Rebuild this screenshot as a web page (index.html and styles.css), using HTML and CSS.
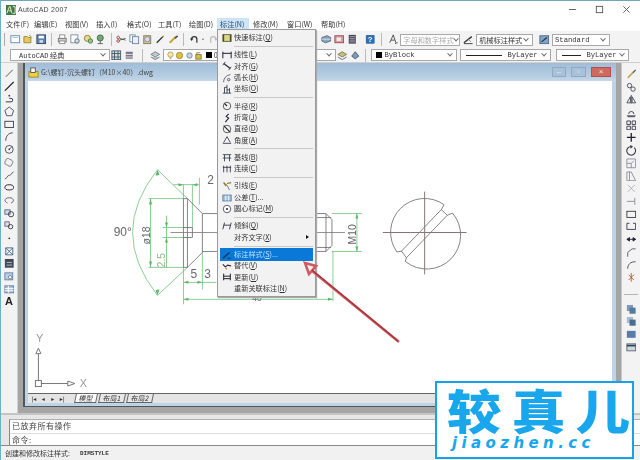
FILE: index.html
```html
<!DOCTYPE html>
<html lang="zh">
<head>
<meta charset="utf-8">
<title>AutoCAD 2007</title>
<link rel="stylesheet" href="styles.css">
</head>
<body>
<div class="app">
  <header class="titlebar">
    <svg class="applogo" viewBox="0 0 12 12"><rect width="12" height="12" fill="#3c7a52"/><path d="M1 10 4 2h1l2 8M3 7h3M8 2h3v8H8" fill="none" stroke="#f2e9a8" stroke-width="1.2"/></svg>
    <span class="apptitle">AutoCAD 2007</span>
    <span class="grow"></span>
    <svg class="winbtn" viewBox="0 0 10 10"><path d="M1 5h8" stroke="#555"/></svg>
    <svg class="winbtn" viewBox="0 0 10 10"><rect x="1.5" y="1.5" width="7" height="7" fill="none" stroke="#555"/></svg>
    <svg class="winbtn" viewBox="0 0 10 10"><path d="M1.5 1.5l7 7M8.5 1.5l-7 7" stroke="#555"/></svg>
  </header>
  <nav class="menubar">
    <span class="mi mi-first">文件(F)</span><span class="mi">编辑(E)</span><span class="mi">视图(V)</span><span class="mi">插入(I)</span><span class="mi">格式(O)</span><span class="mi">工具(T)</span><span class="mi">绘图(D)</span><span class="mi mi-on">标注(N)</span><span class="mi mi-wide">修改(M)</span><span class="mi mi-wide">窗口(W)</span><span class="mi">帮助(H)</span>
  </nav>
  <div class="toolrow row1">
    <span class="grip"></span>
    <svg class="ic" viewBox="0 0 12 12"><rect x="1" y="2" width="10" height="8" fill="#fff" stroke="#5b87b8"/><path d="M3 4h6" stroke="#9cc"/></svg>
    <svg class="ic" viewBox="0 0 12 12"><path d="M1 10V3h4l1 1h3v6z" fill="#e8c85a" stroke="#9a8030"/><path d="M7 1l3 3" stroke="#5a8a3a"/></svg>
    <svg class="ic" viewBox="0 0 12 12"><rect x="1" y="1" width="10" height="10" fill="#5c84b8" stroke="#345"/><rect x="3" y="2" width="6" height="3" fill="#fff"/><rect x="4" y="7" width="4" height="3" fill="#cde"/></svg>
    <span class="tsep"></span>
    <svg class="ic" viewBox="0 0 12 12"><rect x="3" y="1" width="6" height="4" fill="#fff" stroke="#888"/><rect x="1.500" y="5" width="9" height="4" fill="#ccc" stroke="#777"/><rect x="3" y="8" width="6" height="3" fill="#fff" stroke="#888"/></svg>
    <svg class="ic" viewBox="0 0 12 12"><rect x="1" y="1" width="8" height="9" fill="#fff" stroke="#789"/><circle cx="8" cy="8" r="2.500" fill="#cfe3f2" stroke="#567"/></svg>
    <svg class="ic" viewBox="0 0 12 12"><circle cx="5" cy="5" r="3.500" fill="#e8d890" stroke="#8a7a30"/><circle cx="8.500" cy="8" r="2.500" fill="#9cc48a" stroke="#4a7a3a"/></svg>
    <svg class="ic" viewBox="0 0 12 12"><circle cx="6" cy="4.500" r="3.500" fill="#78a868" stroke="#3a6a50"/><path d="M6 8v3M3 11h6" stroke="#555"/></svg>
    <span class="tsep"></span>
    <svg class="ic" viewBox="0 0 12 12"><circle cx="2.500" cy="4" r="1.500" fill="none" stroke="#a33"/><circle cx="2.500" cy="8" r="1.500" fill="none" stroke="#a33"/><path d="M4 5l7 2M4 7l7-2" stroke="#555"/></svg>
    <svg class="ic" viewBox="0 0 12 12"><rect x="1" y="1" width="6" height="8" fill="#fff" stroke="#68a"/><rect x="4" y="3" width="7" height="8" fill="#eef" stroke="#68a"/></svg>
    <svg class="ic" viewBox="0 0 12 12"><rect x="2" y="2" width="8" height="9" fill="#d8c890" stroke="#875"/><circle cx="6" cy="6" r="3" fill="#dde" stroke="#789"/></svg>
    <svg class="ic" viewBox="0 0 12 12"><path d="M2 10 9 3" stroke="#333" stroke-width="1.600"/><path d="M9 3l1-1" stroke="#b90" stroke-width="1.600"/></svg>
    <svg class="ic" viewBox="0 0 12 12"><path d="M2 10 9 3" stroke="#c9a030" stroke-width="2.200"/><path d="M8 5l3-3" stroke="#556" stroke-width="2"/></svg>
    <span class="tsep"></span>
    <svg class="ic" viewBox="0 0 12 12"><path d="M9 10V6a3 3 0 0 0-6 0" fill="none" stroke="#333" stroke-width="1.400"/><path d="M1 5l2 3 2-3z" fill="#234"/></svg>
    <svg class="ic ic-narrow" viewBox="0 0 6 12"><circle cx="3" cy="6" r="1" fill="#444"/></svg>
    <svg class="ic" viewBox="0 0 12 12"><path d="M3 10V6a3 3 0 0 1 6 0" fill="none" stroke="#bbb" stroke-width="1.400"/><path d="M7 5l2 3 2-3z" fill="#bbb"/></svg>
    <span class="grow"></span>
    <svg class="ic" viewBox="0 0 12 12"><path d="M1 4l6-2 4 2v4l-6 2-4-2z" fill="#8aa8c0" stroke="#567"/><path d="M1 6h10" stroke="#dde"/></svg>
    <svg class="ic" viewBox="0 0 12 12"><rect x="1" y="2" width="10" height="8" fill="#d89aa8" stroke="#945"/><rect x="3" y="4" width="5" height="4" fill="#eed"/></svg>
    <svg class="ic" viewBox="0 0 12 12"><rect x="2" y="1" width="8" height="10" fill="#445"/><path d="M3 3h6M3 5h6M3 7h6M3 9h6" stroke="#aab"/></svg>
    <span class="gap5"></span>
    <svg class="ic" viewBox="0 0 12 12"><rect x="1" y="1" width="10" height="10" rx="1" fill="#2f6fb5"/><text x="6" y="9.500" class="helpq">?</text></svg>
    <span class="tsep sep-help"></span>
    <svg class="ic" viewBox="0 0 12 12"><path d="M2 10 6 1l3 9M3.500 7h4M8 11c2-1 3-1 3-1" fill="none" stroke="#444"/></svg>
    <span class="combo combo-dim c-style"><span>字母和数字样式</span><i class="chev"></i></span>
    <svg class="ic" viewBox="0 0 12 12"><path d="M1 10l9-7" stroke="#333" stroke-width="1.500"/><path d="M1 11h10" stroke="#333"/><path d="M6 6l3 3" stroke="#888"/></svg>
    <span class="combo c-dim"><span>机械标注样式</span><i class="chev"></i></span>
    <svg class="ic" viewBox="0 0 12 12"><rect x="1" y="2" width="10" height="9" fill="#7fa4cc" stroke="#567"/><path d="M3 9l6-5" stroke="#234" stroke-width="1.400"/></svg>
    <span class="combo c-std mono"><span>Standard</span><i class="chev"></i></span>
  </div>
  <div class="toolrow row2">
    <span class="combo c-work"><span><b class="mono lat">AutoCAD</b> 经典</span><i class="chev"></i></span>
    <svg class="ic" viewBox="0 0 12 12"><rect x="1" y="1" width="10" height="10" fill="#cdd" stroke="#456"/><path d="M1 4h10M1 8h10M4 1v10M8 1v10" stroke="#456"/></svg>
    <svg class="ic" viewBox="0 0 12 12"><rect x="2" y="2" width="8" height="8" fill="#778"/><path d="M2 5h8M2 8h8" stroke="#eee"/></svg>
    <span class="tsep sep-wide"></span>
    <svg class="ic" viewBox="0 0 12 12"><path d="M1 5l5-3 5 3-5 3zM1 8l5 3 5-3" fill="#bcc" stroke="#778"/></svg>
    <span class="combo c-layer">
      <svg class="lay" viewBox="0 0 10 10"><circle cx="5" cy="4" r="3" fill="#f6ec8c" stroke="#a98"/><path d="M4 8h2" stroke="#777"/></svg>
      <svg class="lay" viewBox="0 0 10 10"><circle cx="5" cy="5" r="3.500" fill="#e3c22c" stroke="#986"/></svg>
      <svg class="lay" viewBox="0 0 10 10"><circle cx="5" cy="5" r="3" fill="#c7d3e0" stroke="#789"/></svg>
      <svg class="lay" viewBox="0 0 10 10"><rect x="2" y="4" width="6" height="5" fill="#d8c030" stroke="#875"/><path d="M3 4V2h4" fill="none" stroke="#875"/></svg>
      <i class="swatch"></i><span>0</span><i class="chev"></i>
    </span>
    <svg class="ic" viewBox="0 0 12 12"><path d="M1 5l5-3 5 3-5 3z" fill="#c6c26a" stroke="#776"/><path d="M1 8l5 3 5-3" fill="none" stroke="#667"/></svg>
    <svg class="ic" viewBox="0 0 12 12"><path d="M2 7l4-5 4 5-4 3z" fill="#7b9cc0" stroke="#456"/></svg>
    <span class="tsep"></span>
    <span class="combo c-by mono"><i class="swatch"></i><span>ByBlock</span><i class="chev"></i></span>
    <span class="combo c-line mono"><i class="ln ln-long"></i><span>ByLayer</span><i class="chev"></i></span>
    <span class="combo c-line2 mono"><i class="ln"></i><span>ByLayer</span><i class="chev"></i></span>
  </div>

  <main class="workspace">
    <aside class="sidebar left">
      <svg class="ic" viewBox="0 0 12 12"><path d="M2 10 10 2" stroke="#444"/></svg>
      <svg class="ic" viewBox="0 0 12 12"><path d="M1 11 11 1" stroke="#223" stroke-width="1.300"/></svg>
      <svg class="ic" viewBox="0 0 12 12"><path d="M2 10h6a2 2 0 0 0 0-4H6" fill="none" stroke="#335" stroke-width="1.100"/><circle cx="6" cy="3" r="1" fill="#335"/></svg>
      <svg class="ic" viewBox="0 0 12 12"><path d="M6 1l5 4-2 6H3L1 5z" fill="none" stroke="#446"/></svg>
      <svg class="ic" viewBox="0 0 12 12"><rect x="1" y="2.500" width="10" height="7" fill="none" stroke="#334"/></svg>
      <svg class="ic" viewBox="0 0 12 12"><path d="M2 11C2 6 5 2 10 2" fill="none" stroke="#334"/></svg>
      <svg class="ic" viewBox="0 0 12 12"><circle cx="6" cy="6" r="4.500" fill="none" stroke="#445"/><circle cx="6" cy="6" r="1" fill="#445"/><path d="M6 6l3-3" stroke="#445"/></svg>
      <svg class="ic" viewBox="0 0 12 12"><path d="M2 4c0-3 4-3 5-1 3 0 4 3 2 5 0 3-4 3-5 1C1 9 0 6 2 4z" fill="none" stroke="#667"/></svg>
      <svg class="ic" viewBox="0 0 12 12"><path d="M1 10c3 0 2-4 5-4s2-3 5-4" fill="none" stroke="#556"/></svg>
      <svg class="ic" viewBox="0 0 12 12"><ellipse cx="6" cy="6" rx="5" ry="3" fill="none" stroke="#223" stroke-width="1.100"/></svg>
      <svg class="ic" viewBox="0 0 12 12"><path d="M4 9C0 8 0 3 6 3s6 5 2 6" fill="none" stroke="#556"/></svg>
      <svg class="ic" viewBox="0 0 12 12"><rect x="1" y="2" width="6" height="5" fill="#cde" stroke="#567"/><circle cx="8" cy="7" r="3" fill="none" stroke="#334"/></svg>
      <svg class="ic" viewBox="0 0 12 12"><rect x="1" y="2" width="5" height="5" fill="#dde" stroke="#667"/><circle cx="7.500" cy="7.500" r="2.500" fill="none" stroke="#334"/></svg>
      <svg class="ic" viewBox="0 0 12 12"><circle cx="6" cy="6" r="1" fill="#334"/></svg>
      <svg class="ic" viewBox="0 0 12 12"><path d="M2 2h8v8H2zM2 2l8 8M10 2l-8 8" fill="none" stroke="#3d6488"/></svg>
      <svg class="ic" viewBox="0 0 12 12"><rect x="1" y="1" width="10" height="10" fill="#3f4a58"/><path d="M3 5h6M3 8h6" stroke="#bcc"/></svg>
      <svg class="ic" viewBox="0 0 12 12"><rect x="1" y="2" width="9" height="8" fill="#b8d0e4" stroke="#5b7fa0"/><circle cx="7" cy="7" r="2" fill="#fff" stroke="#678"/></svg>
      <svg class="ic" viewBox="0 0 12 12"><rect x="1" y="2" width="10" height="8" fill="#a8c4de" stroke="#5b7fa0"/><path d="M1 5h10M1 7.500h10M5 2v8" stroke="#fff"/></svg>
      <span class="ic-a">A</span>
    </aside>
    <div class="mdi">
      <section class="doc">
        <div class="doctitle">
          <svg class="docicon" viewBox="0 0 12 12"><rect x="1" y="5" width="10" height="6" fill="#efd23e" stroke="#a38a20"/><rect x="3" y="1" width="5" height="5" fill="#f8f8f0" stroke="#556"/></svg>
          <span class="docname">G:\螺钉-沉头螺钉（M10×40）.dwg</span>
          <span class="grow"></span>
          <span class="dbtn">–</span><span class="dbtn dbtn-mid">▫</span><span class="dbtn dbtn-close">×</span>
        </div>
        <div class="canvas">
          <svg class="drawing" viewBox="28 81 584 313">
            <g class="dim" fill="none">
              <path d="M157 170Q107 233 157 296"/>
              <path d="M157 170 187 199M157 296 187 268"/>
              <path d="M148 199H183M148 268H183M150 199V268"/>
              <path d="M162 228H183M162 238H183M166 216V268"/>
              <path d="M173 185H199M183 185V199M192 185V228M199 178V205"/>
              <path d="M183 268V305M202 253V290M183 283H216"/>
              <path d="M183 300H333M333 252V302"/>
              <path d="M332 214H362M332 252H362M357 214V252"/>
            </g>
            <g class="dimhead">
              <path d="M150 199l-1.500 6h3zM150 268l-1.500-6h3zM157 170l2 5-4 1zM157 296l-2-5 4-1zM166 228l-1.500-5h3zM166 238l-1.500 5h3zM183 283l5-1.500v3zM202 283l-5-1.500v3zM183 300l5-1.500v3zM333 300l-5-1.500v3zM357 214l-1.500 5h3zM357 252l-1.500-5h3zM183 185l-5-1.500v3zM192 185l5-1.500v3z"/>
            </g>
            <g class="part" fill="none">
              <path d="M183 199H187V268H183ZM187 199 202 214V253L187 268"/>
              <path d="M183 228H192V238H183"/>
              <path d="M202 214H326L332 220V246L326 252H202"/>
              <path d="M316 218H331M316 248H331M326 214V252"/>
              <path d="M170 233H345" class="center"/>
            </g>
            <g class="dimtext">
              <text x="113" y="237" class="t-lg">90°</text>
              <text x="207" y="184" class="t-lg">2</text>
              <text x="190" y="279" class="t-lg">5</text>
              <text x="204" y="279" class="t-lg">3</text>
              <text x="252" y="302" class="t-sm">40</text>
              <text x="0" y="0" transform="translate(149 245) rotate(-90)" class="t-md">ø18</text>
              <text x="0" y="0" transform="translate(165 268) rotate(-90)" class="t-md t-green">2.5</text>
              <text x="0" y="0" transform="translate(356 245) rotate(-90)" class="t-md">M10</text>
            </g>
            <g class="part" fill="none">
              <path d="M444.500 205.100A34 34 0 0 0 397.100 252.500L401.700 251.700"/>
              <path d="M405.500 261.900A34 34 0 0 0 452.900 213.500L447.700 215.700"/>
              <path d="M444.500 205.100 441.700 210M401.700 251.700 441.700 210 447.700 215.700 406.700 258.300 401.700 251.700M405.500 261.900 406.700 258.300"/>
            </g>
            <path class="cross" d="M383 233H467M425 192V275"/>
            <g class="ucs" fill="none">
              <rect x="34.500" y="381.500" width="6" height="6"/>
              <path d="M37.500 381V355M40 384.500H67M37.500 349 40 354.500H35ZM74 384.500 67 382V387Z"/>
            </g>
            <text x="35" y="343" class="ucs-t">Y</text>
            <text x="79" y="388" class="ucs-t">X</text>
          </svg>
        </div>
        <div class="tabs">
          <span class="nav">|◂</span><span class="nav">◂</span><span class="nav">▸</span><span class="nav">▸|</span>
          <span class="tab tab-on">模型</span><span class="tab">布局1</span><span class="tab">布局2</span>
        </div>
      </section>
    </div>
    <aside class="sidebar right">
      <svg class="ic" viewBox="0 0 12 12"><path d="M2 10 9 3" stroke="#c8a850" stroke-width="2"/><path d="M8 4l3-3" stroke="#556" stroke-width="1.400"/></svg>
      <svg class="ic" viewBox="0 0 12 12"><circle cx="4" cy="4" r="2.500" fill="none" stroke="#445"/><circle cx="8" cy="8" r="2.500" fill="none" stroke="#445"/></svg>
      <svg class="ic" viewBox="0 0 12 12"><path d="M6 1v10M5 3 1 10h4zM7 3l4 7H7z" fill="none" stroke="#445"/></svg>
      <svg class="ic" viewBox="0 0 12 12"><path d="M1 10h10M3 8a3 3 0 0 1 6 0" fill="none" stroke="#334"/><path d="M2 11h8" stroke="#334"/></svg>
      <svg class="ic" viewBox="0 0 12 12"><path d="M1 1h4v4H1zM7 1h4v4H7zM1 7h4v4H1zM7 7h4v4H7z" fill="none" stroke="#334"/></svg>
      <svg class="ic" viewBox="0 0 12 12"><path d="M6 1v10M1 6h10" stroke="#223" stroke-width="1.500"/></svg>
      <svg class="ic" viewBox="0 0 12 12"><path d="M9.500 3a5 5 0 1 1-4-1.500M5 .5l2 1.500L5 3.500" fill="none" stroke="#334" stroke-width="1.200"/></svg>
      <svg class="ic" viewBox="0 0 12 12"><path d="M1 1h10v10H1zM1 6h5v5M6 6 9 3" fill="none" stroke="#889"/></svg>
      <svg class="ic" viewBox="0 0 12 12"><path d="M1 11V1h5l5 10zM4 11V1" fill="none" stroke="#889"/></svg>
      <svg class="ic" viewBox="0 0 12 12"><path d="M2 2l8 8M10 2 2 10" stroke="#aab"/></svg>
      <svg class="ic" viewBox="0 0 12 12"><path d="M1 6h9M10 2v8" stroke="#889"/></svg>
      <svg class="ic" viewBox="0 0 12 12"><rect x="1" y="2.500" width="10" height="7" fill="none" stroke="#334"/></svg>
      <svg class="ic" viewBox="0 0 12 12"><path d="M4 2.500H1v7h10v-7H8" fill="none" stroke="#334"/></svg>
      <svg class="ic" viewBox="0 0 12 12"><path d="M1 6h10M1 6l3-2v4zM11 6 8 4v4z" stroke="#223" fill="#223"/></svg>
      <svg class="ic" viewBox="0 0 12 12"><path d="M2 11V6l5-4h4" fill="none" stroke="#556"/></svg>
      <svg class="ic" viewBox="0 0 12 12"><path d="M2 11C2 6 5 3 11 3" fill="none" stroke="#445"/></svg>
      <svg class="ic" viewBox="0 0 12 12"><path d="M3 9l6-6M3 3l6 6M6 1v10" stroke="#b25a2c"/></svg>
      <span class="vsep"></span>
      <svg class="ic" viewBox="0 0 12 12"><rect x="1" y="1" width="7" height="7" fill="#7e9ab6"/><rect x="4" y="4" width="7" height="7" fill="#567a9c"/></svg>
      <svg class="ic" viewBox="0 0 12 12"><rect x="1" y="1" width="7" height="7" fill="#a6bcd0"/><rect x="4" y="4" width="7" height="7" fill="#4a6e92"/></svg>
      <svg class="ic" viewBox="0 0 12 12"><rect x="1" y="2" width="10" height="8" fill="#587ea8"/></svg>
      <svg class="ic" viewBox="0 0 12 12"><rect x="1" y="2" width="10" height="8" fill="#cfd6dc" stroke="#567"/><path d="M1 4h10" stroke="#345" stroke-width="2"/></svg>
    </aside>
  </main>
  <section class="cmd">
    <div class="cmdbox">
      <div class="cmdline">已放弃所有操作</div>
      <div class="cmdline cmdinput">命令:</div>
    </div>
  </section>
  <footer class="status"><span class="st-a">创建和修改标注样式:</span><span class="st-b mono">DIMSTYLE</span></footer>

  <div class="dropmenu">
    <div class="di"><svg class="mic" viewBox="0 0 12 12"><rect x="1" y="2" width="10" height="8" fill="#d8d88a" stroke="#5a5a20"/><path d="M2 2v8M10 2v8" stroke="#222"/></svg><span>快速标注(<u>Q</u>)</span></div>
    <hr class="ds">
    <div class="di"><svg class="mic" viewBox="0 0 12 12"><path d="M1 2v8M11 2v8M1 4h10" stroke="#223" stroke-width="1.200"/></svg><span>线性(<u>L</u>)</span></div>
    <div class="di"><svg class="mic" viewBox="0 0 12 12"><path d="M2 3l8 6" stroke="#334" stroke-width="1.600"/><path d="M4 1 1 5M11 7 8 11" stroke="#334"/></svg><span>对齐(<u>G</u>)</span></div>
    <div class="di"><svg class="mic" viewBox="0 0 12 12"><path d="M2 11C2 6 5 3 10 2" fill="none" stroke="#445"/><circle cx="8" cy="8" r="1.500" fill="none" stroke="#445"/></svg><span>弧长(<u>H</u>)</span></div>
    <div class="di"><svg class="mic" viewBox="0 0 12 12"><path d="M6 1v10M1 11h10M3 4v7M9 5v6M3 4H6M6 7h3" fill="none" stroke="#334"/></svg><span>坐标(<u>O</u>)</span></div>
    <hr class="ds">
    <div class="di"><svg class="mic" viewBox="0 0 12 12"><circle cx="6" cy="6" r="4.500" fill="none" stroke="#444"/><path d="M6 6 3 3" stroke="#222" stroke-width="1.300"/></svg><span>半径(<u>R</u>)</span></div>
    <div class="di"><svg class="mic" viewBox="0 0 12 12"><path d="M8 1l-3 3 3 2-4 5" fill="none" stroke="#223" stroke-width="1.300"/></svg><span>折弯(<u>J</u>)</span></div>
    <div class="di"><svg class="mic" viewBox="0 0 12 12"><circle cx="6" cy="6" r="4.500" fill="none" stroke="#444"/><path d="M2 2l8 8" stroke="#222" stroke-width="1.300"/></svg><span>直径(<u>D</u>)</span></div>
    <div class="di"><svg class="mic" viewBox="0 0 12 12"><path d="M1 10h10M2 9l4-7 4 7" fill="none" stroke="#334"/></svg><span>角度(<u>A</u>)</span></div>
    <hr class="ds">
    <div class="di"><svg class="mic" viewBox="0 0 12 12"><path d="M1 2h10M3 2v8M9 2v8M1 6h10" stroke="#334"/></svg><span>基线(<u>B</u>)</span></div>
    <div class="di"><svg class="mic" viewBox="0 0 12 12"><path d="M2 2v8M6 2v8M10 2v8M1 4h10" stroke="#334"/></svg><span>连续(<u>C</u>)</span></div>
    <hr class="ds">
    <div class="di"><svg class="mic" viewBox="0 0 12 12"><path d="M2 2l4 3 3 6" fill="none" stroke="#575"/><path d="M2 2l3 4M6 3l5-1" stroke="#8a7a20" stroke-width="1.500"/></svg><span>引线(<u>E</u>)</span></div>
    <div class="di"><svg class="mic" viewBox="0 0 12 12"><rect x="1" y="2.500" width="10" height="7" fill="#a9c5dc" stroke="#4b77a0"/><path d="M4.500 3v6M8 3v6" stroke="#fff"/></svg><span>公差(<u>T</u>)...</span></div>
    <div class="di"><svg class="mic" viewBox="0 0 12 12"><circle cx="6" cy="6" r="4.500" fill="#fff" stroke="#445"/><circle cx="6" cy="6" r="1.200" fill="#223"/></svg><span>圆心标记(<u>M</u>)</span></div>
    <hr class="ds">
    <div class="di"><svg class="mic" viewBox="0 0 12 12"><path d="M3 2 1 10M11 2 9 10M2 5h8" stroke="#334" stroke-width="1.100"/></svg><span>倾斜(<u>Q</u>)</span></div>
    <div class="di di-sub"><i class="mic"></i><span>对齐文字(<u>X</u>)</span><i class="subarrow"></i></div>
    <hr class="ds">
    <div class="di di-on"><svg class="mic" viewBox="0 0 12 12"><path d="M1 10l8-7" stroke="#163a66" stroke-width="1.800"/><path d="M6 10h5" stroke="#163a66"/></svg><span>标注样式(<u>S</u>)...</span></div>
    <div class="di"><svg class="mic" viewBox="0 0 12 12"><path d="M1 4l3 3 3-2 4 1" fill="none" stroke="#223" stroke-width="1.300"/><path d="M4 8l2 2" stroke="#b19a20" stroke-width="1.500"/></svg><span>替代(<u>V</u>)</span></div>
    <div class="di"><svg class="mic" viewBox="0 0 12 12"><path d="M2 2v8M10 2v8M2 5h8M2 8h8" stroke="#223" stroke-width="1.200"/></svg><span>更新(<u>U</u>)</span></div>
    <div class="di"><i class="mic"></i><span>重新关联标注(<u>N</u>)</span></div>
  </div>

  <svg class="arrow" viewBox="0 0 640 460">
    <path class="arrow-out" d="M399 342 311 270M305 263 316 266 309 274Z"/>
    <path class="arrow-in" d="M398 341 312 270"/>
  </svg>
</div>
<aside class="wm">
  <div class="wm-cn"><span>较</span><span>真</span><span>儿</span></div>
  <div class="wm-en">jiaozhen.cc</div>
</aside>
</body>
</html>
```
FILE: styles.css
```css
* { box-sizing: border-box; }
html, body { margin: 0; padding: 0; }
body { width: 640px; height: 460px; overflow: hidden; position: relative; background: #f0f0f0; font-family: "Noto Sans CJK SC", "Liberation Sans", sans-serif; color: #222; }
.app { width: 640px; height: 460px; display: flex; flex-direction: column; background: #f2f2f2; border-left: 1px solid #6fb0c4; border-top: 1px solid #6fa8b8; filter: blur(0.35px); position: relative; }
.grow { flex: 1; }
.mono { font-family: "Liberation Mono", "DejaVu Sans Mono", "Noto Sans CJK SC", monospace; }
svg { display: block; flex: none; }

.titlebar { height: 17px; background: #fff; display: flex; align-items: center; padding: 0 5px 0 5px; flex: none; }
.applogo { width: 10px; height: 10px; }
.apptitle { font: 7px "Liberation Sans", sans-serif; color: #444; margin-left: 2px; letter-spacing: .25px; }
.winbtn { width: 9px; height: 9px; margin-left: 18px; margin-right: 0; }
.winbtn:last-child { margin-right: 4px; }

.menubar { height: 13px; background: #fff; display: flex; align-items: center; flex: none; }
.mi { font-size: 7.2px; color: #333; padding: 0 4px; height: 13px; line-height: 13px; width: 31px; white-space: nowrap; flex: none; }
.mi-first { padding-left: 5px; width: 29px; }
.mi-wide { width: 34px; }
.mi-on { background: #cde5f7; padding: 0 3px; color: #2a4a78; width: 32px; margin-left: 1px; }

.toolrow { display: flex; align-items: center; background: #f3f3f3; flex: none; }
.row1 { height: 17px; padding: 0 30px 0 3px; }
.row2 { height: 15px; padding: 0 9px 0 8px; border-bottom: 1px solid #cfcfcf; }
.grip { width: 2px; height: 13px; border-left: 1px solid #aaa; margin-right: 3px; }
.ic { width: 10.5px; height: 10.5px; margin: 0 1.2px; }
.ic-narrow { width: 4px; margin: 0 1px; }
.tsep { width: 1px; height: 13px; background: #bbb; margin: 0 3.5px; flex: none; }
.sep-wide { margin: 0 6px; }
.sep-help { margin: 0 4.5px; }
.gap5 { width: 5px; }
.helpq { font: bold 9px "Liberation Sans", sans-serif; fill: #fff; text-anchor: middle; }

.combo { height: 12px; background: #fff; border: 1px solid #a8a8a8; display: flex; align-items: center; font-size: 7.2px; padding: 0 2px; flex: none; color: #333; overflow: hidden; white-space: nowrap; margin-left: 1px; }
.chev { margin-left: auto; width: 4px; height: 4px; border-right: 1px solid #666; border-bottom: 1px solid #666; transform: rotate(45deg) translate(-1px,-1px); flex: none; margin-right: 2px; }
.combo-dim { color: #aaa; }
.c-style { width: 60px; margin-right: 2px; }
.c-dim { width: 57px; margin-right: 5px; }
.c-std { width: 58px; }
.c-work { width: 100px; }
.c-layer { width: 173px; gap: 0; }
.c-by { width: 86px; margin-left: 2px; }
.c-line { width: 91px; margin-left: 3px; }
.c-line2 { width: 73px; margin-left: 5px; }
.lat { font-weight: normal; font-size: 7px; margin-left: 6px; }
.lay { width: 9px; height: 9px; margin-right: .5px; }
.swatch { width: 6px; height: 6px; background: #000; flex: none; margin: 0 2px; display: block; }
.ln { width: 33px; height: 0; border-top: 1px solid #222; margin: 0 5px 0 3px; display: block; flex: none; }
.ln-long { width: 36px; margin-right: 5px; }
.c-line2 .ln { width: 19px; margin-left: 3px; }

.workspace { flex: 1; display: flex; min-height: 0; }
.sidebar { flex: none; display: flex; flex-direction: column; align-items: center; background: #f3f3f3; }
.sidebar .ic { height: 12.7px; width: 10.5px; margin: 0; padding: 1px 0; }
.left { width: 16px; padding-top: 4px; }
.right { width: 18px; padding-top: 5px; }
.ic-a { height: 12.7px; line-height: 12.7px; font: bold 11px/12.7px "Liberation Sans", sans-serif; color: #222; }
.vsep { width: 14px; height: 1px; background: #b5b5b5; margin: 10px 0 8px; flex: none; }
.mdi { flex: 1; background: #a5a5a5; display: flex; padding: 0 5px 6px 5px; border-right: 1px solid #c8c8c8; min-width: 0; border-left: 1px solid #d0d0d0; }
.doc { flex: 1; display: flex; flex-direction: column; background: #bcd3e8; border-left: 2px solid #555; border-bottom: 1px solid #555; padding: 0 4px 3px 3px; min-width: 0; }
.doctitle { height: 18px; flex: none; display: flex; align-items: center; background: linear-gradient(#9fbcd8, #b8cfe4 80%, #c8d8e8); margin: 0 -4px 0 -3px; padding: 0 5px 0 3px; font-size: 7px; color: #444; }
.docicon { width: 11px; height: 11px; margin-right: 2px; }
.docname { white-space: nowrap; }
.dbtn { width: 14px; height: 10px; background: #a9c2d8; border: 1px solid #8fa9c2; color: #eef; font: 8px/8px "Liberation Sans", sans-serif; text-align: center; margin-left: 5px; display: block; }
.dbtn-mid { width: 15px; }
.dbtn-close { width: 20px; background: #cf6a5c; border-color: #b05246; }
.canvas { flex: 1; background: #fff; min-height: 0; }
.drawing { width: 100%; height: 100%; }
.dim path { stroke: #6dc178; stroke-width: .8; }
.dimhead { fill: #5fb46c; }
.part path { stroke: #666; stroke-width: .8; }
.part .center { stroke: #777; }
.cross { stroke: #8a7470; stroke-width: 1; fill: none; }
.dimtext text { fill: #666; font-family: "Liberation Sans", sans-serif; }
.t-lg { font-size: 12px; }
.t-md { font-size: 10.5px; }
.t-sm { font-size: 8.5px; }
.dimtext .t-green { fill: #8fb98f; }
.ucs rect, .ucs path { stroke: #777; stroke-width: 1; }
.ucs-t { fill: #999; font: 11px "Liberation Sans", sans-serif; }
.tabs { height: 10px; flex: none; background: #e4e4e4; border-top: 1px solid #666; display: flex; align-items: center; padding-left: 1px; font-size: 7px; color: #333; }
.nav { width: 9.5px; font: 6px "DejaVu Sans", sans-serif; text-align: center; color: #333; }
.tab { padding: 0 3px; height: 9px; line-height: 8px; border: 1px solid #666; border-top: none; margin-left: 2px; background: #e8e8e8; transform: skewX(-12deg); white-space: nowrap; }
.tab-on { background: #fff; margin-left: 8px; }

.cmd { height: 33px; flex: none; background: #e6e6e6; border-top: 2px solid #c4c4c4; padding: 4px 0 0 8px; border-bottom: 1px solid #888; }
.cmdbox { background: #fff; border-left: 1px solid #888; border-top: 1px solid #b0b0b0; height: 26px; }
.cmdline { font-size: 8px; height: 12px; line-height: 12px; padding-left: 2px; color: #444; letter-spacing: .5px; }
.cmdinput { border-top: 1px solid #ddd; margin-top: 1px; }
.status { height: 14px; flex: none; background: #f1f1f1; display: flex; align-items: center; font-size: 7px; padding-left: 4px; color: #333; }
.st-a { width: 75px; }
.st-b { font-size: 6px; font-weight: bold; }

.dropmenu { position: absolute; left: 216px; top: 28px; width: 99px; height: 268px; background: #f2f2f2; border: 1px solid #9a9a9a; padding-top: 2px; box-shadow: 1px 1px 1px #aaa; font-size: 7.2px; color: #333; }
.di { height: 11.4px; line-height: 11.4px; display: flex; align-items: center; padding-left: 4px; white-space: nowrap; }
.mic { width: 10px; height: 10px; margin-right: 2px; display: block; flex: none; }
.ds { height: 1px; border: 0; background: #c8c8c8; margin: 2.400px 2px 2.400px 16px; }
.di-sub { position: relative; }
.subarrow { position: absolute; right: 6px; top: 3.500px; border-left: 3px solid #111; border-top: 2.500px solid transparent; border-bottom: 2.500px solid transparent; }
.di-on { background: #0a78d7; color: #bfe0ff; margin: 0 2px; padding-left: 2px; height: 12.5px; margin-top: -.6px; margin-bottom: -.5px; }
u { text-decoration: underline; }
.arrow { position: absolute; left: -1px; top: -1px; width: 640px; height: 460px; pointer-events: none; }
.arrow-out { stroke: #cf5a62; stroke-width: 2.6; fill: none; }
.arrow-in { stroke: #a5333c; stroke-width: 1.300; fill: none; }

.wm { position: absolute; left: 435px; top: 381px; width: 199px; height: 78px; background: #fff; border: 2.500px solid #16a2e8; display: flex; flex-direction: column; color: #18a6ec; }
.wm-cn { display: flex; gap: 9px; font: 900 47px/48px "Noto Sans CJK SC", sans-serif; height: 48px; margin: 2px 0 0 10px; width: 160px; white-space: nowrap; transform: scaleX(1.15); transform-origin: left center; }
.wm-en { font: italic bold 15px/18px "DejaVu Sans", sans-serif; letter-spacing: 4.4px; white-space: nowrap; margin: 1px 0 0 15px; width: 178px; }
```
